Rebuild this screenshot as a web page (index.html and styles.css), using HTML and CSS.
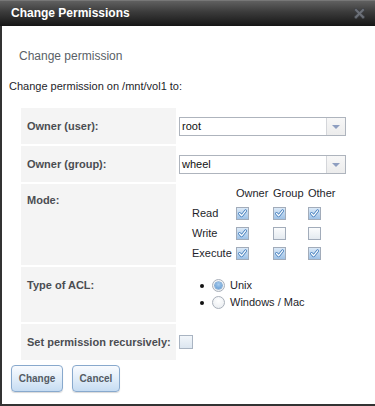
FILE: index.html
```html
<!DOCTYPE html>
<html>
<head>
    <title>Change Permissions</title>
    <link rel="stylesheet" href="styles.css">
</head>
<body>
    <div class="dialog">
        <div class="titlebar">
            <span class="title">Change Permissions</span>
            <span class="close">
                <svg width="11" height="11" viewBox="0 0 11 11">
                    <path d="M2 2 L9 9 M9 2 L2 9" stroke="#3e4045" stroke-width="3.8" stroke-linecap="square"/>
                    <path d="M2 2 L9 9 M9 2 L2 9" stroke="#6c7078" stroke-width="2" stroke-linecap="square"/>
                </svg>
            </span>
        </div>

        <div class="content">
            <div class="legend">Change permission</div>
            <p class="intro">Change permission on /mnt/vol1 to:</p>

            <div class="form-grid">
                <div class="label">Owner (user):</div>
                <div class="field field-select">
                    <div class="select">
                        <span class="select-value">root</span>
                        <span class="select-arrow"></span>
                    </div>
                </div>

                <div class="label">Owner (group):</div>
                <div class="field field-select">
                    <div class="select">
                        <span class="select-value">wheel</span>
                        <span class="select-arrow"></span>
                    </div>
                </div>

                <div class="label label-mode">Mode:</div>
                <div class="field">
                    <div class="mode-grid">
                        <span></span>
                        <span class="mode-head">Owner</span>
                        <span class="mode-head">Group</span>
                        <span class="mode-head">Other</span>

                        <span class="mode-label">Read</span>
                        <span class="cb checked"><svg viewBox="0 0 11 11"><path class="o" d="M2.5 5.5 L4.6 7.8 L8.6 2.8"/><path class="i" d="M2.5 5.5 L4.6 7.8 L8.6 2.8"/></svg></span>
                        <span class="cb checked"><svg viewBox="0 0 11 11"><path class="o" d="M2.5 5.5 L4.6 7.8 L8.6 2.8"/><path class="i" d="M2.5 5.5 L4.6 7.8 L8.6 2.8"/></svg></span>
                        <span class="cb checked"><svg viewBox="0 0 11 11"><path class="o" d="M2.5 5.5 L4.6 7.8 L8.6 2.8"/><path class="i" d="M2.5 5.5 L4.6 7.8 L8.6 2.8"/></svg></span>

                        <span class="mode-label">Write</span>
                        <span class="cb checked"><svg viewBox="0 0 11 11"><path class="o" d="M2.5 5.5 L4.6 7.8 L8.6 2.8"/><path class="i" d="M2.5 5.5 L4.6 7.8 L8.6 2.8"/></svg></span>
                        <span class="cb"></span>
                        <span class="cb"></span>

                        <span class="mode-label">Execute</span>
                        <span class="cb checked"><svg viewBox="0 0 11 11"><path class="o" d="M2.5 5.5 L4.6 7.8 L8.6 2.8"/><path class="i" d="M2.5 5.5 L4.6 7.8 L8.6 2.8"/></svg></span>
                        <span class="cb checked"><svg viewBox="0 0 11 11"><path class="o" d="M2.5 5.5 L4.6 7.8 L8.6 2.8"/><path class="i" d="M2.5 5.5 L4.6 7.8 L8.6 2.8"/></svg></span>
                        <span class="cb checked"><svg viewBox="0 0 11 11"><path class="o" d="M2.5 5.5 L4.6 7.8 L8.6 2.8"/><path class="i" d="M2.5 5.5 L4.6 7.8 L8.6 2.8"/></svg></span>
                    </div>
                </div>

                <div class="label">Type of ACL:</div>
                <div class="field field-acl">
                    <ul class="radio-list">
                        <li><span class="radio checked"></span>Unix</li>
                        <li><span class="radio"></span>Windows / Mac</li>
                    </ul>
                </div>

                <div class="label">Set permission recursively:</div>
                <div class="field field-recursive">
                    <span class="cb cb-large"></span>
                </div>
            </div>

            <div class="actions">
                <button class="btn btn-change">Change</button>
                <button class="btn btn-cancel">Cancel</button>
            </div>
        </div>
    </div>
</body>
</html>
```

FILE: styles.css
```css
/* Base styles */
* {
    margin: 0;
    padding: 0;
    box-sizing: border-box;
}

body {
    font-family: "Liberation Sans", Arial, sans-serif;
    background-color: #fff;
    color: #222;
}

/* Dialog frame */
.dialog {
    width: 375px;
    height: 406px;
    border-left: 2px solid #333;
    border-bottom: 2px solid #333;
    background-color: #fff;
}

.titlebar {
    height: 26px;
    margin-left: -2px;
    display: flex;
    align-items: center;
    justify-content: space-between;
    padding: 0 10px 0 11px;
    background: linear-gradient(#606060, #3a3a3a 45%, #1d1d1d 90%, #151515);
    border-top: 1px solid #777;
}

.title {
    color: #fff;
    font-weight: bold;
    font-size: 12px;
    padding-bottom: 1px;
}

.close {
    display: flex;
    margin-top: -1px;
}

/* Content */
.legend {
    margin: 23px 0 0 17px;
    font-size: 12px;
    line-height: 14px;
    color: #5a5f66;
}

.intro {
    margin: 17px 0 0 7px;
    font-size: 11px;
    line-height: 13px;
    color: #1e1e2a;
}

.form-grid {
    display: grid;
    grid-template-columns: 155px 1fr;
    grid-template-rows: 36px 36px 81px 55px 36px;
    column-gap: 3px;
    row-gap: 2px;
    margin: 15px 0 0 19px;
}

.label {
    background-color: #f4f4f4;
    padding: 12px 0 12px 6px;
    font-size: 11px;
    line-height: 13px;
    font-weight: bold;
    color: #4b4d52;
    white-space: nowrap;
}

.label-mode {
    padding-top: 10px;
}

.field {
    font-size: 11px;
    line-height: 13px;
    color: #1e1e2a;
}

/* Select */
.field-select {
    padding-top: 9px;
}

.select {
    width: 167px;
    height: 19px;
    display: flex;
    border: 1px solid #aeb4bd;
    background-color: #fff;
}

.select-value {
    flex: 1;
    padding: 2px 0 0 2px;
    font-size: 11px;
    color: #111;
}

.select-arrow {
    width: 19px;
    border-left: 1px solid #d4d6da;
    background: linear-gradient(#f7f7f7, #ececec);
    position: relative;
}

.select-arrow::after {
    content: "";
    position: absolute;
    left: 5px;
    top: 7px;
    border-left: 4px solid transparent;
    border-right: 4px solid transparent;
    border-top: 4px solid #8e9ec0;
}

/* Mode matrix */
.mode-grid {
    display: grid;
    grid-template-columns: 44px 37px 35px auto;
    grid-template-rows: 19px 20px 20px 20px;
    align-items: center;
    margin-left: 13px;
}

.mode-head,
.mode-label {
    font-size: 11px;
    color: #1e1e2a;
}

.cb {
    display: block;
    width: 13px;
    height: 13px;
    border: 1px solid #a2acba;
    background: linear-gradient(#fbfcfd, #e4eaf0);
}

.cb.checked {
    background: linear-gradient(#dbe9f7, #9fc2e6);
}

.cb svg {
    display: block;
    width: 11px;
    height: 11px;
}

.cb svg path {
    fill: none;
    stroke-linecap: round;
    stroke-linejoin: round;
}

.cb svg .o {
    stroke: #3f7bbb;
    stroke-width: 2.8;
}

.cb svg .i {
    stroke: #fff;
    stroke-width: 1.3;
}

.cb-large {
    width: 14px;
    height: 14px;
    border-color: #a9b4c2;
    background: linear-gradient(#f2f6fa, #dce6f0);
}

.field-recursive {
    padding-top: 11px;
}

/* ACL radios */
.field-acl {
    padding-top: 10px;
}

.radio-list {
    list-style: none;
    margin-left: 21px;
}

.radio-list li {
    display: flex;
    align-items: center;
    height: 17px;
}

.radio-list li::before {
    content: "";
    width: 4px;
    height: 4px;
    border-radius: 50%;
    background-color: #111;
    margin-right: 8px;
}

.radio {
    width: 13px;
    height: 13px;
    border-radius: 50%;
    border: 1px solid #a9b0ba;
    background: radial-gradient(circle at 50% 35%, #ffffff, #e6eaee);
    margin-right: 5px;
    position: relative;
}

.radio.checked::after {
    content: "";
    position: absolute;
    left: 2px;
    top: 2px;
    width: 7px;
    height: 7px;
    border-radius: 50%;
    background: radial-gradient(circle at 50% 35%, #a9cdef, #5b95cf);
    box-shadow: 0 0 0 0.6px #4f86bf;
}

/* Buttons */
.actions {
    display: flex;
    gap: 9px;
    margin: 5px 0 0 9px;
}

.btn {
    height: 27px;
    border: 1px solid #88a9cd;
    border-radius: 4px;
    background: linear-gradient(#f9fbfe, #e1edf9 50%, #c6dcf2);
    font-family: "Liberation Sans", Arial, sans-serif;
    font-size: 10px;
    font-weight: bold;
    color: #545b64;
    box-shadow: 0 1px 1px rgba(0,0,0,0.15);
}

.btn-change {
    width: 52px;
}

.btn-cancel {
    width: 48px;
}
```
